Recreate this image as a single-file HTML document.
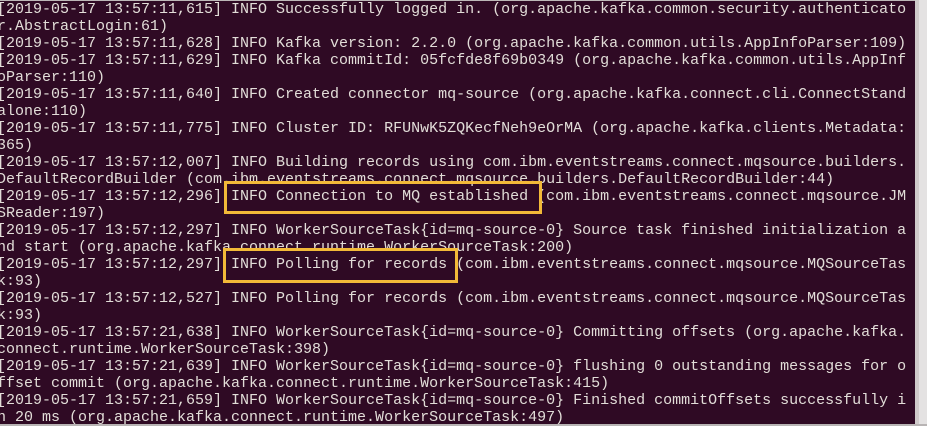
<!DOCTYPE html>
<html><head><meta charset="utf-8"><style>
html,body{margin:0;padding:0;width:927px;height:426px;overflow:hidden;background:#e4e2e2}
#t{position:absolute;left:0;top:0;width:915px;height:424px;background:#2f0a24;overflow:hidden;border-top:1px solid #bdb8b8}
pre{margin:0;position:absolute;left:-3px;top:0px;font-family:"Liberation Mono",monospace;font-size:15px;line-height:17px;color:#e2ddd8;white-space:pre;letter-spacing:0px}
.b{position:absolute;border:3px solid #f2b938;box-sizing:border-box}
#bot{position:absolute;left:0;top:424px;width:927px;height:2px;background:#b8b4b4}
#sb{position:absolute;left:915px;top:0;width:4px;height:424px;background:#cfcaca}
</style></head><body>
<div id="t"><pre>[2019-05-17 13:57:11,615] INFO Successfully logged in. (org.apache.kafka.common.security.authenticato
r.AbstractLogin:61)
[2019-05-17 13:57:11,628] INFO Kafka version: 2.2.0 (org.apache.kafka.common.utils.AppInfoParser:109)
[2019-05-17 13:57:11,629] INFO Kafka commitId: 05fcfde8f69b0349 (org.apache.kafka.common.utils.AppInf
oParser:110)
[2019-05-17 13:57:11,640] INFO Created connector mq-source (org.apache.kafka.connect.cli.ConnectStand
alone:110)
[2019-05-17 13:57:11,775] INFO Cluster ID: RFUNwK5ZQKecfNeh9eOrMA (org.apache.kafka.clients.Metadata:
365)
[2019-05-17 13:57:12,007] INFO Building records using com.ibm.eventstreams.connect.mqsource.builders.
DefaultRecordBuilder (com.ibm.eventstreams.connect.mqsource.builders.DefaultRecordBuilder:44)
[2019-05-17 13:57:12,296] INFO Connection to MQ established (com.ibm.eventstreams.connect.mqsource.JM
SReader:197)
[2019-05-17 13:57:12,297] INFO WorkerSourceTask{id=mq-source-0} Source task finished initialization a
nd start (org.apache.kafka.connect.runtime.WorkerSourceTask:200)
[2019-05-17 13:57:12,297] INFO Polling for records (com.ibm.eventstreams.connect.mqsource.MQSourceTas
k:93)
[2019-05-17 13:57:12,527] INFO Polling for records (com.ibm.eventstreams.connect.mqsource.MQSourceTas
k:93)
[2019-05-17 13:57:21,638] INFO WorkerSourceTask{id=mq-source-0} Committing offsets (org.apache.kafka.
connect.runtime.WorkerSourceTask:398)
[2019-05-17 13:57:21,639] INFO WorkerSourceTask{id=mq-source-0} flushing 0 outstanding messages for o
ffset commit (org.apache.kafka.connect.runtime.WorkerSourceTask:415)
[2019-05-17 13:57:21,659] INFO WorkerSourceTask{id=mq-source-0} Finished commitOffsets successfully i
n 20 ms (org.apache.kafka.connect.runtime.WorkerSourceTask:497)</pre>
<div class="b" style="left:224px;top:180px;width:318px;height:33px"></div>
<div class="b" style="left:223px;top:247px;width:235px;height:35px"></div>
</div>
<div id="sb"></div>
<div id="bot"></div>
</body></html>
